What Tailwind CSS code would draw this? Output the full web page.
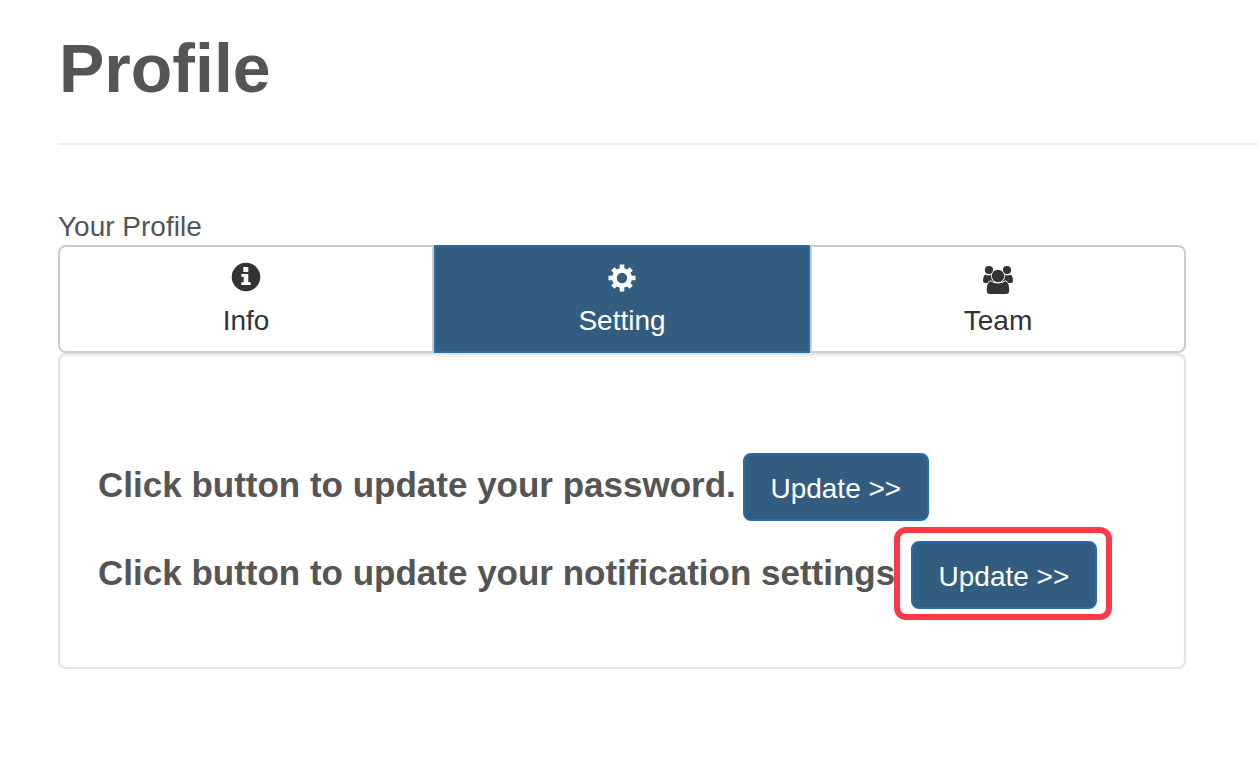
<!DOCTYPE html>
<html lang="en">
<head>
<meta charset="utf-8">
<meta name="viewport" content="width=device-width, initial-scale=1">
<title>Profile</title>
<script src="https://cdn.jsdelivr.net/npm/@tailwindcss/browser@4"></script>
</head>
<body class="bg-white pl-[58px] font-['Liberation_Sans',Arial,sans-serif] text-[28px] leading-10 text-[#555]">
<header class="border-b-2 border-[#eee] pt-7 pb-[35px]">
  <h1 class="pl-px text-[68px] leading-[80px] font-bold">Profile</h1>
</header>
<main class="mr-[72px] pt-16">
  <p class="leading-9">Your Profile</p>
  <nav aria-label="Profile sections" class="grid h-[108px] grid-cols-3 text-[#333]">
    <button type="button" class="flex flex-col items-center rounded-l-lg border-2 border-[#ccc] bg-white pt-[14px]">
      <svg class="size-8" viewBox="0 0 32 32" aria-hidden="true"><circle cx="16" cy="16" r="14.300" fill="#333"/><path fill="#fff" d="M13.300 6h5v5h-5zM11.300 13h7v8.300h2.400V24h-9.400v-2.700h2.400v-5.600h-2.400z"/></svg>
      <span class="mt-2 leading-10">Info</span>
    </button>
    <button type="button" aria-pressed="true" class="flex flex-col items-center border-2 border-[#286da8] bg-[#325d80] pt-[14px] text-white">
      <svg class="size-8" viewBox="0 0 32 32" fill="none" stroke="#fff" aria-hidden="true"><circle cx="16" cy="17" r="7.600" stroke-width="4.800"/><path stroke-width="4.600" stroke-linejoin="round" d="M16 8.500v-5M16 25.500v5M7.500 17h-5M24.500 17h5"/><path stroke-width="4.600" d="M10.200 11.200l-3.400-3.400M21.800 11.200l3.400-3.400M10.200 22.800l-3.400 3.400M21.800 22.800l3.400 3.400"/></svg>
      <span class="mt-2 leading-10">Setting</span>
    </button>
    <button type="button" class="flex flex-col items-center rounded-r-lg border-2 border-[#ccc] bg-white pt-[14px]">
      <svg class="size-8 overflow-visible" viewBox="0 0 32 32" aria-hidden="true"><g fill="#333"><circle cx="7" cy="9" r="4.100"/><circle cx="25" cy="9" r="4.100"/><path d="M3.200 13.500Q6.500 15.500 10 13.500L14 20 8 22H3Q1 22 1 20 1 15 3.200 13.500zM28.800 13.500Q25.500 15.500 22 13.500L18 20 24 22h5q2 0 2-2 0-5-2.200-6.500z"/></g><g fill="#333" stroke="#fff" stroke-width="1.600" paint-order="stroke"><path d="M8.500 20.200Q16 25 23.500 20.200C26.500 21.500 27.200 25 27.200 29.500Q27.200 33 24 33H8Q4.800 33 4.800 29.500C4.800 25 5.500 21.500 8.500 20.200z"/><circle cx="16" cy="15" r="6.200"/></g></svg>
      <span class="mt-2 leading-10">Team</span>
    </button>
  </nav>
  <section class="flex flex-col gap-5 rounded-lg border-2 border-[#e3e3e3] px-[38px] pt-[98px] pb-[58px] shadow-[inset_0_2px_2px_rgba(0,0,0,0.05)]">
    <div class="flex items-center gap-[7px]">
      <h2 class="pb-1 text-[35px] leading-10 font-bold whitespace-nowrap">Click button to update your password.</h2>
      <button type="button" class="h-[68px] w-[186px] shrink-0 rounded-lg border-2 border-[#286da8] bg-[#325d80] pt-1 whitespace-nowrap text-white">Update &gt;&gt;</button>
    </div>
    <div class="flex items-center gap-[6px]">
      <h2 class="pb-1 text-[35px] leading-10 font-bold whitespace-nowrap">Click button to update your notification settings.</h2>
      <div class="relative flex shrink-0">
        <div class="pointer-events-none absolute -top-[14px] -right-[15px] -bottom-[11px] -left-[17px] rounded-xl border-6 border-[#ff3848] bg-white"></div>
        <button type="button" class="z-10 h-[68px] w-[186px] rounded-lg border-2 border-[#286da8] bg-[#325d80] pt-1 whitespace-nowrap text-white">Update &gt;&gt;</button>
      </div>
    </div>
  </section>
</main>
</body>
</html>
